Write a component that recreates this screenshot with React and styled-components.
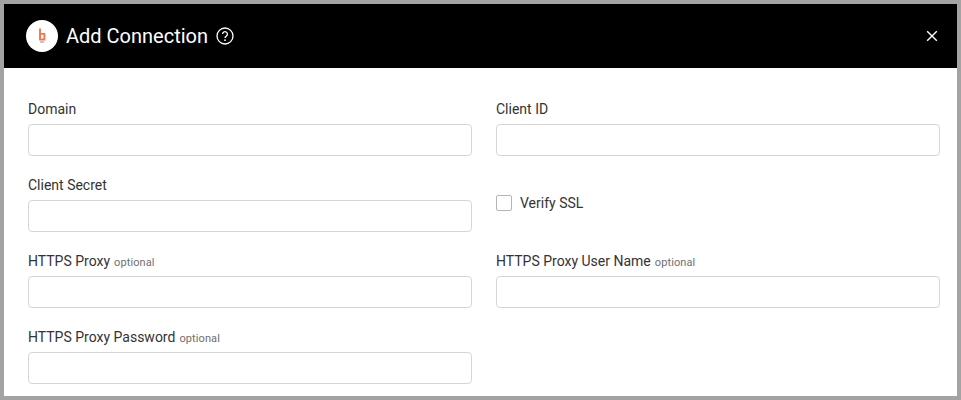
import React from "react";
import styled, { createGlobalStyle } from "styled-components";

const GlobalStyle = createGlobalStyle`
  html, body { margin: 0; padding: 0; background: #fff; }
  * { box-sizing: border-box; }
`;

const Frame = styled.div`
  width: 961px;
  height: 400px;
  border: 4px solid #a3a3a3;
  background: #fff;
  overflow: hidden;
  font-family: Roboto, "Liberation Sans", sans-serif;
`;

const Header = styled.header`
  height: 64px;
  background: #000;
  color: #fff;
  display: flex;
  align-items: center;
  padding: 0 13px 0 22px;
`;

const Logo = styled.div`
  width: 32px;
  height: 32px;
  border-radius: 50%;
  background: #fff;
  display: flex;
  align-items: center;
  justify-content: center;
  margin-right: 8px;
`;

const Title = styled.h1`
  margin: 0 8px 0 0;
  font-size: 20px;
  font-weight: 400;
  line-height: 28px;
`;

const HelpIcon = styled.svg`
  width: 18px;
  height: 18px;
  display: block;
`;

const CloseButton = styled.button`
  margin-left: auto;
  width: 24px;
  height: 24px;
  padding: 0;
  border: 0;
  background: none;
  color: #fff;
  display: flex;
  align-items: center;
  justify-content: center;
`;

const Form = styled.form`
  display: grid;
  grid-template-columns: 444px 444px;
  column-gap: 24px;
  row-gap: 20px;
  padding: 32px 0 0 24px;
`;

const Field = styled.div`
  display: flex;
  flex-direction: column;
  height: 56px;
`;

const Label = styled.label`
  height: 18px;
  margin-bottom: 6px;
  font-size: 14px;
  line-height: 18px;
  color: #333;
  display: flex;
  align-items: baseline;
  gap: 4px;
  white-space: pre;
`;

const Optional = styled.span`
  font-size: 11px;
  letter-spacing: 0.1px;
  color: #6f6f6f;
`;

const Input = styled.input`
  width: 444px;
  height: 32px;
  border: 1px solid #d6d6d6;
  border-radius: 4px;
  background: #fff;
  outline: none;
`;

const CheckRow = styled.div`
  display: flex;
  align-items: center;
  gap: 8px;
  height: 56px;
  padding-bottom: 2px;
  font-size: 14px;
  color: #333;
`;

const CheckBox = styled.span`
  width: 16px;
  height: 16px;
  border: 1px solid #b5b5b5;
  border-radius: 2px;
  background: #fff;
`;

const TextField = ({ label, optional }) => (
  <Field>
    <Label>
      {label}
      {optional && <Optional>optional</Optional>}
    </Label>
    <Input type="text" />
  </Field>
);

export default function App() {
  return (
    <Frame>
      <GlobalStyle />
      <Header>
        <Logo>
          <svg width="10" height="20" viewBox="0 0 10 20">
            <path
              d="M3 2.5v11h4.4v-5.6h-4.4"
              fill="none"
              stroke="#f4764a"
              strokeWidth="1.9"
            />
            <rect x="3" y="15.2" width="4" height="1.6" fill="#b9b9b9" />
          </svg>
        </Logo>
        <Title>Add Connection</Title>
        <HelpIcon viewBox="0 0 18 18">
          <circle cx="9" cy="9" r="8" fill="none" stroke="#fff" strokeWidth="1.3" />
          <path
            d="M6.6 7.1a2.4 2.4 0 1 1 3.7 2c-.9.6-1.3 1-1.3 2"
            fill="none"
            stroke="#fff"
            strokeWidth="1.3"
          />
          <circle cx="9" cy="13.2" r=".9" fill="#fff" />
        </HelpIcon>
        <CloseButton type="button" aria-label="Close">
          <svg width="12" height="12" viewBox="0 0 12 12">
            <path d="M1.2 1.2l9.6 9.6M10.8 1.2l-9.6 9.6" stroke="#fff" strokeWidth="1.4" />
          </svg>
        </CloseButton>
      </Header>
      <Form>
        <TextField label="Domain" />
        <TextField label="Client ID" />
        <TextField label="Client Secret" />
        <CheckRow>
          <CheckBox />
          Verify SSL
        </CheckRow>
        <TextField label="HTTPS Proxy" optional />
        <TextField label="HTTPS Proxy User Name" optional />
        <TextField label="HTTPS Proxy Password" optional />
      </Form>
    </Frame>
  );
}
